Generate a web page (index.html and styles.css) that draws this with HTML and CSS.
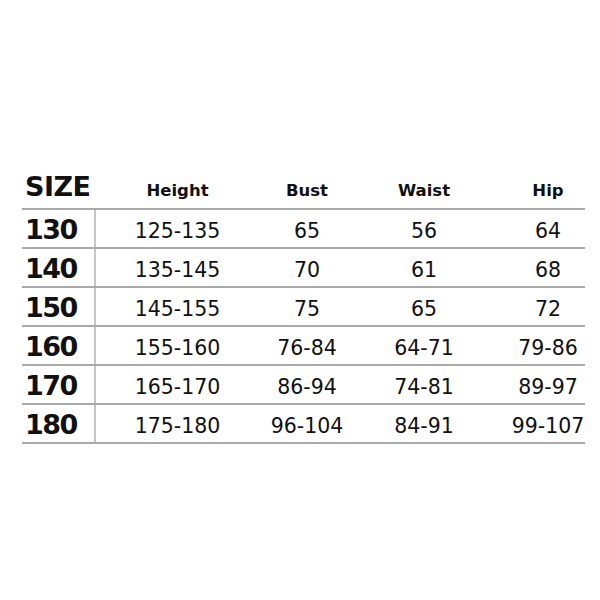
FILE: index.html
```html
<!DOCTYPE html>
<html>
<head>
<meta charset="utf-8">
<link rel="stylesheet" href="styles.css">
</head>
<body>
<div class="chart">
  <div class="row head">
    <div class="size">SIZE</div>
    <div class="c c2">Height</div>
    <div class="c c3">Bust</div>
    <div class="c c4">Waist</div>
    <div class="c c5">Hip</div>
  </div>
  <div class="row">
    <div class="size">130</div>
    <div class="c c2">125-135</div>
    <div class="c c3">65</div>
    <div class="c c4">56</div>
    <div class="c c5">64</div>
  </div>
  <div class="row">
    <div class="size">140</div>
    <div class="c c2">135-145</div>
    <div class="c c3">70</div>
    <div class="c c4">61</div>
    <div class="c c5">68</div>
  </div>
  <div class="row">
    <div class="size">150</div>
    <div class="c c2">145-155</div>
    <div class="c c3">75</div>
    <div class="c c4">65</div>
    <div class="c c5">72</div>
  </div>
  <div class="row">
    <div class="size">160</div>
    <div class="c c2">155-160</div>
    <div class="c c3">76-84</div>
    <div class="c c4">64-71</div>
    <div class="c c5">79-86</div>
  </div>
  <div class="row">
    <div class="size">170</div>
    <div class="c c2">165-170</div>
    <div class="c c3">86-94</div>
    <div class="c c4">74-81</div>
    <div class="c c5">89-97</div>
  </div>
  <div class="row">
    <div class="size">180</div>
    <div class="c c2">175-180</div>
    <div class="c c3">96-104</div>
    <div class="c c4">84-91</div>
    <div class="c c5">99-107</div>
  </div>
</div>
</body>
</html>
```

FILE: styles.css
```css
html, body {
  margin: 0;
  padding: 0;
  background: #ffffff;
}
body {
  width: 600px;
  height: 600px;
  font-family: "DejaVu Sans", Verdana, sans-serif;
  color: #111;
}
.chart {
  margin: 170px 0 0 22px;
  width: 563px;
}
.row {
  display: grid;
  grid-template-columns: 74px 163px 96px 138px 92px;
  height: 37px;
  border-bottom: 2px solid #a9a9a9;
  align-items: end;
}
.row.head {
  height: 38px;
}
.size {
  height: 100%;
  box-sizing: border-box;
  padding-left: 3px;
  font-weight: bold;
  font-size: 27px;
  letter-spacing: -1.5px;
  line-height: 27px;
  display: flex;
  align-items: flex-end;
  padding-bottom: 4px;
  border-right: 2px solid #c4c4c4;
}
.head .size {
  border-right: 2px solid transparent;
  padding-bottom: 8px;
  letter-spacing: -0.5px;
}
.c {
  text-align: center;
  font-size: 20.5px;
  line-height: 20px;
  padding-bottom: 6px;
  white-space: nowrap;
}
.head .c {
  font-weight: bold;
  font-size: 16.5px;
  line-height: 17px;
  padding-bottom: 9px;
}
.c5 {
  padding-left: 18px;
}
```
